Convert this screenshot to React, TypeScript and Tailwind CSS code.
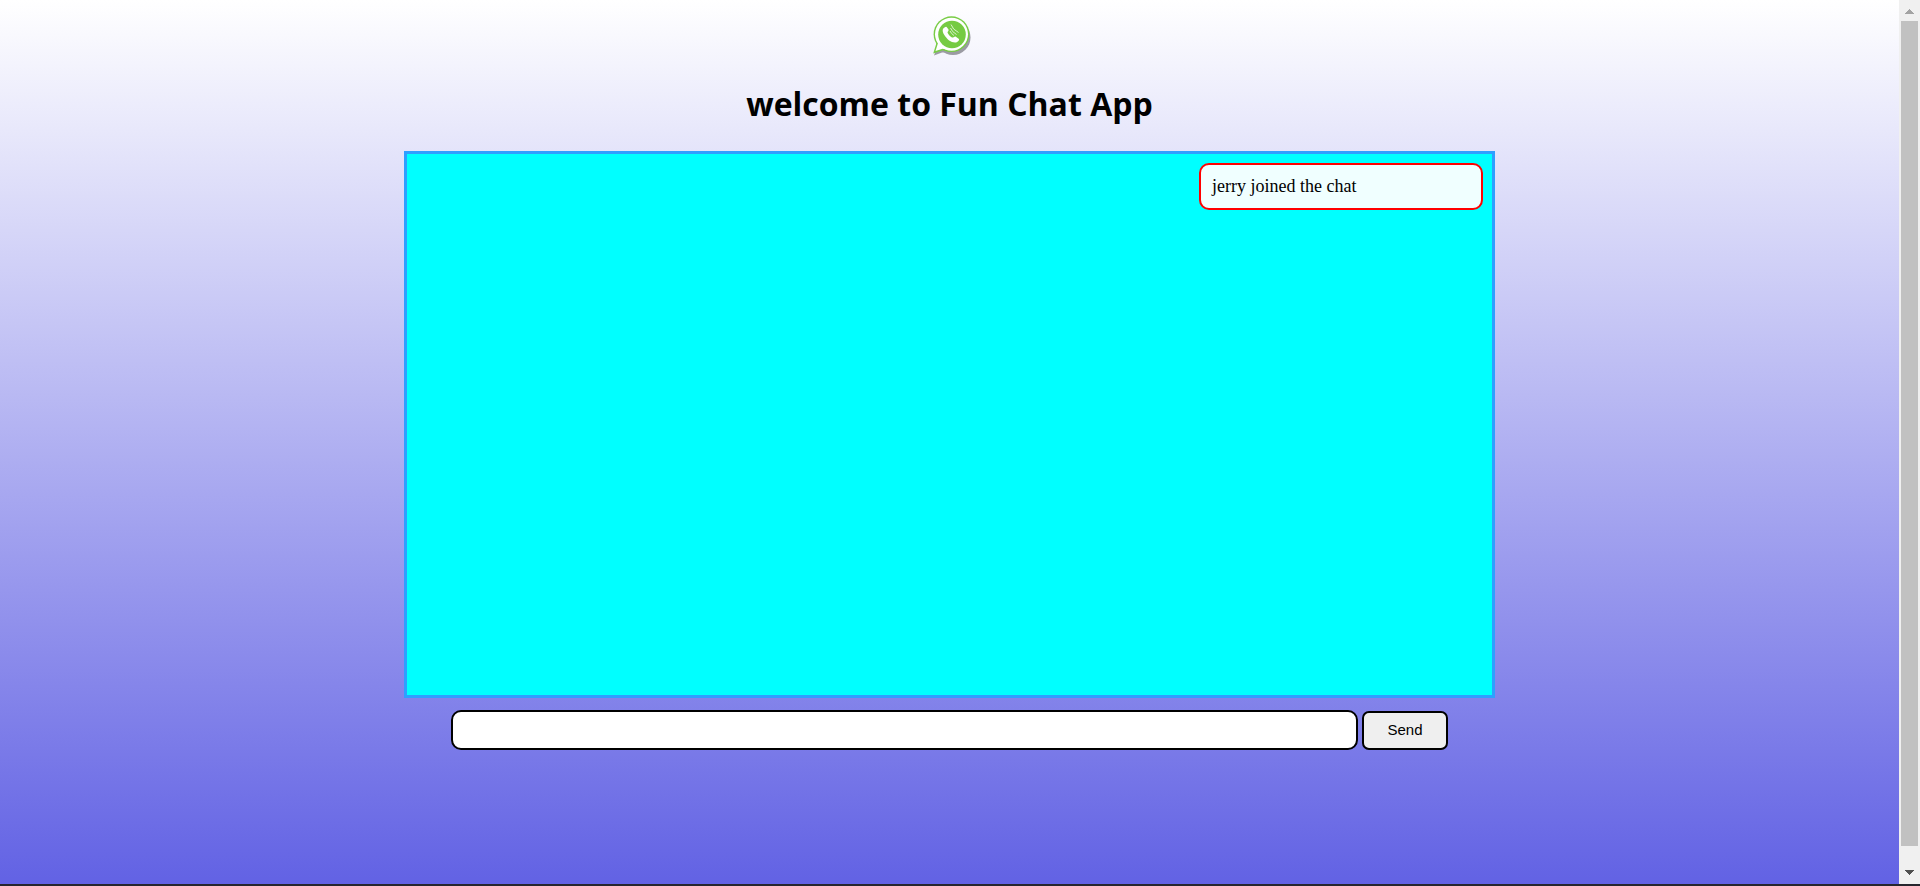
import { useState } from "react";
import type { FormEvent } from "react";

function Logo() {
  return (
    <svg viewBox="0 0 64 56" className="ml-1 h-14 w-16" role="img" aria-label="Chat logo">
      <g fill="#9b9ba3">
        <circle cx="33" cy="29.500" r="17.500" />
        <path d="M14 47.500 L18 36 L30 44.500 L22 44.500 Z" />
      </g>
      <g fill="#78cc45">
        <circle cx="31.500" cy="26.200" r="17.900" />
        <path d="M13.200 45.500 L16.500 35 L30 43.500 L23 42.300 Z" />
      </g>
      <g fill="#fff">
        <circle cx="31.500" cy="26.200" r="16.500" />
        <path d="M15.500 43 L18.200 34.500 L28 41.500 L22.500 40.700 Z" />
      </g>
      <circle cx="32" cy="26.500" r="13.800" fill="#76cb42" />
      <path
        d="M24.500 19.500 C22.500 20.500 22 23 24 26.500 C27 31.500 31 34.500 35 34.500 C37.500 34.500 39.500 32.500 39 31 L35.500 28.500 C34.500 28 33.500 30 32 29.500 C30 28.500 28 26 27.500 24.500 C27.500 23.500 29 23 28.500 21.500 L27 19.500 C26.500 18.500 25.500 18.800 24.500 19.500 Z"
        fill="#fff"
      />
      <path
        d="M31 16.500 Q32.500 21.500 38.500 24.500 M30.500 20 Q32 24 36.500 26.500 M30 23 Q31.500 26 34 27.500"
        fill="none"
        stroke="#e3f5d9"
        strokeWidth="0.900"
      />
    </svg>
  );
}

function ScrollRail() {
  return (
    <div aria-hidden="true" className="flex w-[21px] shrink-0 flex-col items-center bg-[#f0f0f0]">
      <svg viewBox="0 0 21 21" className="h-[21px] w-[21px]" shapeRendering="crispEdges">
        <path d="M6 14 L10.500 9 L15 14 Z" fill="#a3a3a3" />
      </svg>
      <div className="w-[17px] flex-1 bg-[#c1c1c1]" />
      <svg viewBox="0 0 21 38" className="h-[38px] w-[21px]" shapeRendering="crispEdges">
        <path d="M6 24 L10.500 29 L15 24 Z" fill="#505050" />
      </svg>
    </div>
  );
}

export default function App() {
  const [messages, setMessages] = useState<string[]>(["jerry joined the chat"]);
  const [draft, setDraft] = useState("");

  const send = (event: FormEvent) => {
    event.preventDefault();
    if (!draft.trim()) return;
    setMessages([...messages, draft]);
    setDraft("");
  };

  return (
    <div className="flex min-h-screen flex-col bg-[#26262e]">
      <div className="flex flex-1 border-b-2 border-[#26262e]">
        <div className="flex flex-1 flex-col items-center bg-linear-to-b/srgb from-white to-[#6262e4] pt-2">
          <Logo />
          <h1 className="mt-4 mb-[23px] font-['Open_Sans','Noto_Sans',sans-serif] text-[32px] leading-12 font-bold text-black">
            welcome to Fun Chat App
          </h1>
          <main className="flex h-[547px] w-[57.45%] flex-col items-end gap-3 overflow-y-auto border-3 border-[#2f9fff] bg-[#00ffff] p-[9px]">
            {messages.map((message, index) => (
              <p
                key={index}
                className="w-[284px] rounded-[10px] border-2 border-[#ff0000] bg-[#f0ffff] px-[11px] py-3 font-['Liberation_Serif',serif] text-[18px] leading-[19px] text-black"
              >
                {message}
              </p>
            ))}
          </main>
          <form onSubmit={send} className="flex w-[52.5%] items-end gap-1 pt-3">
            <input
              type="text"
              aria-label="Message"
              value={draft}
              onChange={(event) => setDraft(event.target.value)}
              className="h-10 min-w-0 flex-1 rounded-[10px] border-2 border-black bg-white px-3 font-['Liberation_Sans',sans-serif] text-base text-black"
            />
            <button
              type="submit"
              className="h-[39px] w-[86px] rounded-[7px] border-2 border-black bg-[#efefef] font-['Liberation_Sans',sans-serif] text-[15px] text-black"
            >
              Send
            </button>
          </form>
        </div>
        <ScrollRail />
      </div>
    </div>
  );
}
